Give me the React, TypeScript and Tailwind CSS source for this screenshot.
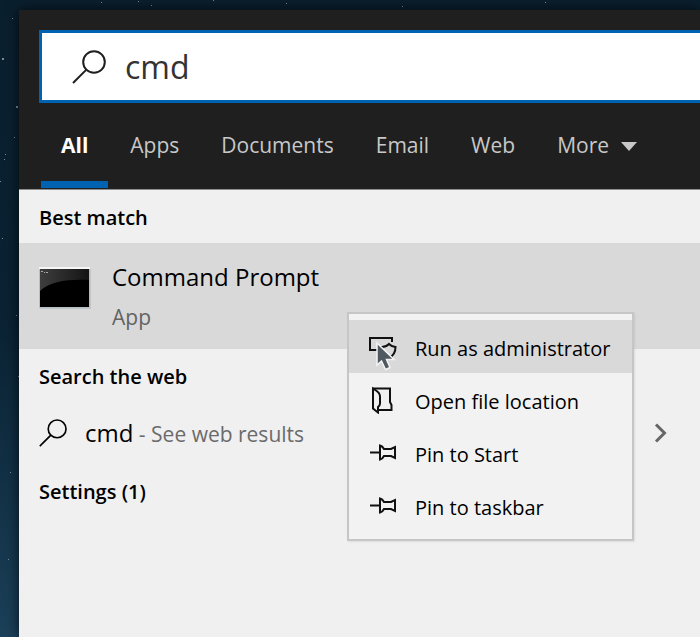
import type { ReactNode } from "react";

interface MenuItem {
  label: string;
  icon: ReactNode;
}

const tabs = ["All", "Apps", "Documents", "Email", "Web"];

const stars = [
  { x: 101, y: 2, r: 1 },
  { x: 138, y: 1, r: 1 },
  { x: 151, y: 5, r: 1 },
  { x: 213, y: 0, r: 1 },
  { x: 286, y: 3, r: 1 },
  { x: 402, y: 6, r: 1 },
  { x: 545, y: 2, r: 1 },
  { x: 12, y: 18, r: 1 },
  { x: 2, y: 58, r: 2 },
  { x: 16, y: 106, r: 2 },
  { x: 14, y: 137, r: 1 },
  { x: 5, y: 154, r: 1 },
  { x: 4, y: 159, r: 1 },
  { x: 0, y: 181, r: 1 },
  { x: 2, y: 238, r: 1 },
  { x: 16, y: 315, r: 1 },
  { x: 18, y: 376, r: 1 },
  { x: 10, y: 472, r: 1 },
  { x: 8, y: 559, r: 1 },
];

function StarField() {
  return (
    <svg className="absolute inset-0 h-full w-full" aria-hidden="true">
      {stars.map((star) => (
        <rect key={`${star.x}-${star.y}`} x={star.x} y={star.y} width={star.r} height={star.r} fill="#7b8a93" />
      ))}
    </svg>
  );
}

function SearchIcon({ className, stroke }: { className: string; stroke: number }) {
  return (
    <svg viewBox="0 0 34 34" className={className} fill="none" stroke="currentColor" strokeWidth={stroke} aria-hidden="true">
      <circle cx="22" cy="12" r="10.8" />
      <path d="M14.4 19.6 1 33" />
    </svg>
  );
}

function ConsoleIcon() {
  return (
    <svg width="52" height="44" viewBox="0 0 52 44" className="shrink-0" aria-hidden="true">
      <defs>
        <linearGradient id="gloss" x1="0" y1="0" x2="1" y2="0">
          <stop offset="0" stopColor="#3e3e3e" />
          <stop offset="1" stopColor="#141414" />
        </linearGradient>
      </defs>
      <rect x="1" y="2" width="51" height="40" fill="#c2c4c6" />
      <rect x="0" y="0" width="51" height="41" fill="#b4c0c8" />
      <rect x="0" y="0" width="51" height="2" fill="#f6f6f6" />
      <rect x="1" y="2" width="49" height="38" fill="#000" />
      <path d="M1 2h49v11C30 12 11 14 1 24z" fill="url(#gloss)" />
      <path d="M2 4.500h2M5 5.500h1M7 5.500h2" stroke="#aaa" strokeWidth="1" />
    </svg>
  );
}

function ShieldIcon() {
  return (
    <svg width="28" height="28" viewBox="0 0 28 28" fill="none" stroke="#111" strokeWidth="2" aria-hidden="true">
      <path d="M12 17H1V5h22v4" />
      <path d="M13 14c3 0 5-1 7-3 2 2 4 3 6.500 3 0 5-1.500 8.500-6.500 11-5-2.500-7-6-7-11z" />
    </svg>
  );
}

function FolderIcon() {
  return (
    <svg width="28" height="28" viewBox="0 0 28 28" fill="none" stroke="#111" strokeWidth="2" aria-hidden="true">
      <path d="M4 2.500h17V16l1.500 3v5H9" />
      <path d="M4 2.500l3 2q4 2.500 4 6v7q0 2-2 3.500v5.500l-5-4z" />
    </svg>
  );
}

function PinIcon() {
  return (
    <svg width="28" height="28" viewBox="0 0 28 28" fill="none" stroke="#111" strokeWidth="2" aria-hidden="true">
      <path d="M1 13.500h10" />
      <path d="M11 6.500v14q2.500-.5 4-3.500h7l4 2V8l-4 2h-7q-1.500-3-4-3.500z" />
    </svg>
  );
}

function Pointer() {
  return (
    <svg width="22" height="32" viewBox="0 0 22 32" className="absolute top-[27px] left-[26px]" aria-hidden="true">
      <path d="M2 2v22l4.500-4 4 8.500 4.500-2-3.500-8H19z" fill="#515960" stroke="#f4f4f4" strokeWidth="1.500" />
    </svg>
  );
}

const menuItems: MenuItem[] = [
  { label: "Run as administrator", icon: <ShieldIcon /> },
  { label: "Open file location", icon: <FolderIcon /> },
  { label: "Pin to Start", icon: <PinIcon /> },
  { label: "Pin to taskbar", icon: <PinIcon /> },
];

function ContextMenu() {
  return (
    <div
      role="menu"
      className="absolute top-[122px] left-[328px] w-[287px] border-2 border-[#c6c6c6] bg-[#f2f2f2] pt-1.5 pb-[7px] shadow-[1px_1px_2px_rgba(0,0,0,0.08)]"
    >
      {menuItems.map((item, index) => (
        <button
          key={item.label}
          type="button"
          role="menuitem"
          className={`flex h-[53px] w-full items-center gap-[18px] pl-5 text-left text-[20px] whitespace-nowrap ${
            index === 0 ? "bg-[#d9d9d9]" : ""
          }`}
        >
          {item.icon}
          <span className="pt-1">{item.label}</span>
        </button>
      ))}
      <Pointer />
    </div>
  );
}

function SectionTitle({ children }: { children: ReactNode }) {
  return <h2 className="flex h-[53px] items-center pt-0.5 pl-5 text-[20px] font-semibold">{children}</h2>;
}

function Header() {
  return (
    <header className="border-b border-[#8f8f8f] bg-[#1f1f1f] pt-5 pl-5">
      <label className="flex h-[73px] items-center gap-[19px] border-[3px] border-r-0 border-[#0063b1] bg-white pl-[30px] text-[#1f1f1f]">
        <SearchIcon className="h-[34px] w-[34px] shrink-0" stroke={2} />
        <input
          type="text"
          defaultValue="cmd"
          aria-label="Search"
          className="min-w-0 flex-1 bg-transparent text-[32px] text-[#333] outline-none"
        />
      </label>
      <nav className="flex gap-0.5 pt-2 pb-px pl-0.5 text-[21px] text-[#c8c8c8]">
        {tabs.map((tab, index) => (
          <button
            key={tab}
            type="button"
            className={`h-[77px] border-b-[7px] px-5 ${
              index === 0 ? "border-[#0063b1] font-bold text-white" : "border-transparent"
            }`}
          >
            {tab}
          </button>
        ))}
        <button type="button" className="flex h-[77px] items-center gap-3 border-b-[7px] border-transparent px-5">
          More
          <svg width="16" height="9" viewBox="0 0 16 9" fill="currentColor" aria-hidden="true">
            <path d="M0 0h16L8 9z" />
          </svg>
        </button>
      </nav>
    </header>
  );
}

function App() {
  return (
    <div className="relative flex min-h-screen overflow-hidden bg-gradient-to-b from-[#0a1f2e] via-[#0a2233] to-[#1b4059] pt-2.5 pl-[19px] font-['Open_Sans','Noto_Sans',sans-serif]">
      <StarField />
      <div className="relative flex min-w-0 flex-1 flex-col bg-[#f0f0f0] text-black shadow-[0_0_12px_rgba(0,0,0,0.7)]">
        <Header />
        <main className="relative flex-1">
          <SectionTitle>Best match</SectionTitle>
          <button type="button" className="flex h-[106px] w-full gap-[21px] bg-[#d9d9d9] pt-[18px] pl-5 text-left">
            <span className="pt-1.5">
              <ConsoleIcon />
            </span>
            <span className="flex flex-col gap-2">
              <span className="text-[24px] leading-8">Command Prompt</span>
              <span className="text-[21px] leading-8 text-[#636363]">App</span>
            </span>
          </button>
          <SectionTitle>Search the web</SectionTitle>
          <button type="button" className="flex h-[62px] w-full items-center pr-[33px] pl-5 text-left">
            <SearchIcon className="h-7 w-7 shrink-0" stroke={2} />
            <span className="flex-1 pl-[18px] text-[21px] text-[#6b6b6b]">
              <span className="text-[24px] text-black">cmd</span> - See web results
            </span>
            <svg width="13" height="20" viewBox="0 0 13 20" fill="none" stroke="#666" strokeWidth="3" aria-hidden="true">
              <path d="M2 1.500 10.500 10 2 18.500" />
            </svg>
          </button>
          <SectionTitle>Settings (1)</SectionTitle>
          <ContextMenu />
        </main>
      </div>
    </div>
  );
}

export default App;
